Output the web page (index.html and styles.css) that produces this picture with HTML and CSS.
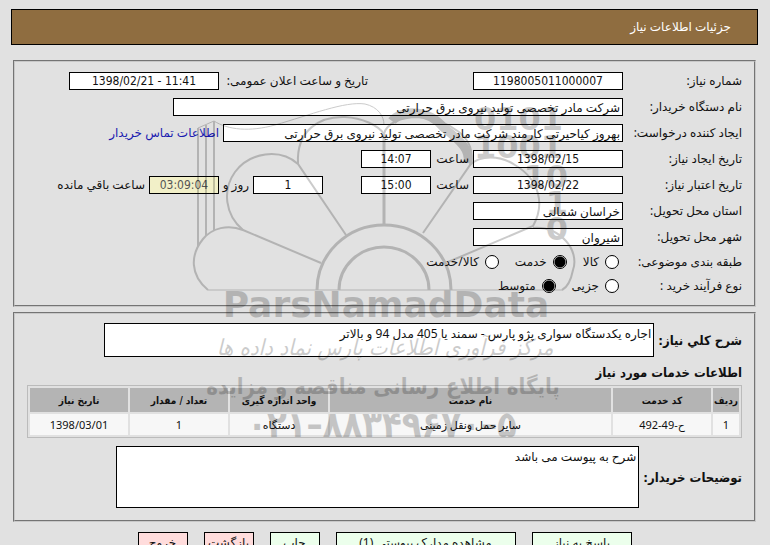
FILE: index.html
```html
<!DOCTYPE html>
<html lang="fa" dir="rtl">
<head>
  <meta charset="UTF-8">
  <meta name="viewport" content="width=device-width, initial-scale=1.0">
  <title>جزئیات اطلاعات نیاز</title>
  <link rel="stylesheet" href="styles.css">
</head>
<body>

<div class="page">
  <h1 class="page-title">جزئیات اطلاعات نیاز</h1>

  <form class="need-form">
    <fieldset class="box need-info">
      <div class="row">
        <label class="row-label" for="needNo">شماره نیاز:</label>
        <input class="field field-md center" id="needNo" type="text" value="1198005011000007" readonly>
        <label class="announce-label" for="announce">تاریخ و ساعت اعلان عمومی:</label>
        <input class="field field-md center" id="announce" type="text" dir="ltr" value="1398/02/21 - 11:41" readonly>
      </div>
      <div class="row">
        <label class="row-label" for="buyer">نام دستگاه خریدار:</label>
        <input class="field field-xl" id="buyer" type="text" value="شرکت مادر تخصصی تولید نیروی برق حرارتی" readonly>
      </div>
      <div class="row">
        <label class="row-label" for="creator">ایجاد کننده درخواست:</label>
        <input class="field field-lg" id="creator" type="text" value="بهروز کیاحیرتی کارمند شرکت مادر تخصصی تولید نیروی برق حرارتی" readonly>
        <a class="contact-link" href="#">اطلاعات تماس خریدار</a>
      </div>
      <div class="row">
        <label class="row-label" for="createDate">تاریخ ایجاد نیاز:</label>
        <input class="field field-md center" id="createDate" type="text" dir="ltr" value="1398/02/15" readonly>
        <label class="time-label" for="createTime">ساعت</label>
        <input class="field field-sm center" id="createTime" type="text" value="14:07" readonly>
      </div>
      <div class="row">
        <label class="row-label" for="validDate">تاریخ اعتبار نیاز:</label>
        <input class="field field-md center" id="validDate" type="text" dir="ltr" value="1398/02/22" readonly>
        <label class="time-label" for="validTime">ساعت</label>
        <input class="field field-sm center" id="validTime" type="text" value="15:00" readonly>
        <input class="field field-sm center days-left" id="daysLeft" type="text" value="1" readonly>
        <label class="days-label" for="daysLeft">روز و</label>
        <input class="field field-sm center countdown" id="timeLeft" type="text" value="03:09:04" readonly>
        <label for="timeLeft">ساعت باقي مانده</label>
      </div>
      <div class="row">
        <label class="row-label" for="province">استان محل تحویل:</label>
        <input class="field field-md" id="province" type="text" value="خراسان شمالی" readonly>
      </div>
      <div class="row">
        <label class="row-label" for="city">شهر محل تحویل:</label>
        <input class="field field-md" id="city" type="text" value="شیروان" readonly>
      </div>
      <div class="row radio-row">
        <span class="row-label">طبقه بندی موضوعی:</span>
        <label class="option"><input type="radio" name="category">کالا</label>
        <label class="option"><input type="radio" name="category" checked>خدمت</label>
        <label class="option"><input type="radio" name="category">کالا/خدمت</label>
      </div>
      <div class="row radio-row">
        <span class="row-label">نوع فرآیند خرید :</span>
        <label class="option"><input type="radio" name="process">جزیی</label>
        <label class="option"><input type="radio" name="process" checked>متوسط</label>
      </div>
    </fieldset>

    <fieldset class="box need-details">
      <div class="text-row">
        <label for="summary">شرح کلي نیاز:</label>
        <textarea class="summary" id="summary" readonly>اجاره یکدستگاه سواری پژو پارس - سمند یا 405 مدل 94 و بالاتر</textarea>
      </div>

      <h2 class="section-title">اطلاعات خدمات مورد نیاز</h2>
      <table class="services">
        <thead>
          <tr>
            <th class="col-index">ردیف</th>
            <th class="col-code">کد خدمت</th>
            <th>نام خدمت</th>
            <th class="col-code">واحد اندازه گیری</th>
            <th class="col-code">تعداد / مقدار</th>
            <th class="col-code">تاریخ نیاز</th>
          </tr>
        </thead>
        <tbody>
          <tr>
            <td>1</td>
            <td>ح-49-492</td>
            <td>سایر حمل ونقل زمینی</td>
            <td>دستگاه</td>
            <td>1</td>
            <td><bdo dir="ltr">1398/03/01</bdo></td>
          </tr>
        </tbody>
      </table>

      <div class="text-row">
        <label for="notes">توضیحات خریدار:</label>
        <textarea class="notes" id="notes" readonly>شرح به پیوست می باشد</textarea>
      </div>
    </fieldset>

    <div class="actions">
      <button class="btn btn-md" type="button">پاسخ به نیاز</button>
      <button class="btn btn-lg" type="button">مشاهده مدارک پیوستی (1)</button>
      <button class="btn btn-sm" type="button">چاپ</button>
      <button class="btn btn-sm btn-exit" type="button">بازگشت</button>
      <button class="btn btn-sm btn-exit" type="button">خروج</button>
    </div>
  </form>

  <!-- Watermark over the form -->
  <svg class="watermark" viewBox="190 90 390 360" direction="ltr" aria-hidden="true">
    <g class="wm-lines">
      <path class="thin" d="M214 121C228 130 250 132 275 125C310 115 345 101 365 104C378 107 384 116 384 125M198 128L214 121"/>
      <path d="M198 246V128M206 236V125M214 231V121"/>
      <path d="M384 134V225" stroke-width="3"/>
      <path d="M208 290C190 275 190 255 203 239C212 228 228 224 243 230L321 263"/>
      <path d="M243 230C225 215 222 190 235 172C250 152 280 148 298 164L346 235"/>
      <path d="M298 164C296 130 320 116 345 117C362 118 378 125 384 134"/>
      <path d="M384 134C386 124 400 117 418 117C450 120 478 138 470 165L423 233"/>
      <path d="M470 165C480 155 500 155 515 165C540 180 545 205 533 226L448 262"/>
      <path d="M533 228C560 226 580 250 573 270C571 280 568 287 562 290"/>
      <path class="thin" d="M208 290H562"/>
      <path d="M317 290A67 65 0 0 1 451 290M339 290A45 43 0 0 1 429 290" stroke-width="3"/>
      <path d="M392 121C400 110 428 108 444 128C462 142 470 150 468 163" stroke-width="9"/>
    </g>
    <g class="wm-text">
      <text class="bits" x="563" y="130" text-anchor="end">0101</text>
      <text class="bits" x="563" y="158" text-anchor="end">1001</text>
      <text class="bits" x="568" y="188" text-anchor="end">10</text>
      <text class="bits" x="568" y="214" text-anchor="end">1</text>
      <text class="bits" x="568" y="240" text-anchor="end">0</text>
      <text class="brand" x="386" y="317" text-anchor="middle">ParsNamadData</text>
      <text class="motto" x="385" y="355" text-anchor="middle">مرکز فرآوری اطلاعات پارس نماد داده ها</text>
      <text class="site" x="383" y="394" text-anchor="middle">پایگاه اطلاع رسانی مناقصه و مزایده</text>
      <text class="phone" x="382" y="437" text-anchor="middle">۰۲۱–۸۸۳۴۹۶۷۰–۵</text>
    </g>
  </svg>
</div>

</body>
</html>
```
FILE: styles.css
```css
body {
  margin: 0;
  background-color: #e1e1e1;
  color: #111;
  font-family: "Noto Sans", "DejaVu Sans", sans-serif;
  font-size: 12px;
  line-height: 16px;
}
.page {
  position: relative;
  padding: 9px 12px 12px 11px;
}
.page-title {
  margin: 0;
  padding: 0 26px;
  border: 1px solid #000;
  background-color: #8f6d40;
  color: #fff;
  font-size: 12px;
  font-weight: normal;
  line-height: 34px;
}
.need-form {
  padding: 15px 2px 0;
}
.box {
  margin: 0;
  min-width: 0;
  border: 2px groove #c8c8c8;
}
.need-info {
  padding: 6px 12px 7px;
}
.need-details {
  margin-top: 5px;
  padding: 9px 12px 12px;
}
.row {
  display: flex;
  align-items: center;
  gap: 4px;
  height: 26px;
  white-space: nowrap;
}
.row-label {
  width: 115px;
}
.field {
  box-sizing: border-box;
  height: 18px;
  padding: 0 2px;
  border: 1px solid #000;
  background-color: #fff;
  color: #111;
  font: inherit;
}
.field-sm {
  width: 70px;
}
.field-md {
  width: 150px;
}
.field-lg {
  width: 400px;
}
.field-xl {
  width: 450px;
}
.center {
  font-family: "DejaVu Sans Condensed", sans-serif;
  text-align: center;
}
.announce-label {
  width: 145px;
  margin-right: 101px;
}
.contact-link {
  color: #1a1ab0;
  text-decoration: none;
}
.time-label {
  width: 34px;
}
.days-left {
  margin-right: 34px;
}
.days-label {
  width: 26px;
}
.countdown {
  background-color: #f2f0c8;
  color: #555;
}
.radio-row {
  height: 24px;
}
.option {
  display: flex;
  align-items: center;
  gap: 6px;
  margin-left: 12px;
}
.option input {
  appearance: none;
  box-sizing: border-box;
  width: 14px;
  height: 14px;
  margin: 0;
  border: 1px solid #000;
  border-radius: 50%;
  background-color: #fff;
}
.option input:checked {
  background: radial-gradient(circle, #000 5px, #fff 6px);
}
.radio-row .row-label {
  width: 119px;
}
.text-row {
  display: flex;
  align-items: center;
  gap: 4px;
}
.text-row label {
  font: bold 13px "DejaVu Sans Condensed", sans-serif;
}
.text-row textarea {
  box-sizing: border-box;
  margin: 0;
  padding: 2px;
  border: 1px solid #000;
  background-color: #fff;
  color: #111;
  font: inherit;
  resize: none;
}
.summary {
  width: 550px;
  height: 34px;
}
.notes {
  width: 523px;
  height: 62px;
}
.section-title {
  margin: 8px 0 4px;
  font: bold 13px/16px "DejaVu Sans Condensed", sans-serif;
}
.services {
  width: 100%;
  margin-bottom: 8px;
  border: 1px solid #bbb;
  border-spacing: 2px;
  table-layout: fixed;
}
.services th,
.services td {
  padding: 0;
  text-align: center;
  white-space: nowrap;
}
.services th {
  height: 24px;
  background-color: #b4b4b4;
  font: bold 10px "DejaVu Sans Condensed", sans-serif;
}
.services td {
  height: 21px;
  background-color: #f7f7f7;
  font-size: 11px;
}
.services .col-index {
  width: 26px;
}
.services .col-code {
  width: 98px;
}
.actions {
  display: flex;
  justify-content: center;
  gap: 16px;
  padding-top: 10px;
}
.btn {
  height: 22px;
  padding: 0;
  border: 1px solid #000;
  background-color: #ecffec;
  color: #111;
  font: inherit;
  white-space: nowrap;
}
.btn-sm {
  width: 50px;
}
.btn-md {
  width: 100px;
}
.btn-lg {
  width: 180px;
}
.btn-exit {
  background-color: #ffdcdc;
}
.watermark {
  position: absolute;
  top: 90px;
  left: calc(50% - 195px);
  width: 390px;
  height: 360px;
  opacity: 0.2;
  pointer-events: none;
}
.wm-lines {
  fill: none;
  stroke: #000;
  stroke-width: 2;
}
.wm-lines .thin {
  stroke-width: 1;
}
.bits {
  font: bold 32px "DejaVu Sans", sans-serif;
}
.brand {
  font: bold 36px "DejaVu Sans", sans-serif;
}
.motto {
  font: italic 22px "DejaVu Sans Condensed", sans-serif;
}
.site {
  font: bold 22px "DejaVu Sans Condensed", sans-serif;
}
.phone {
  font: bold 36px "DejaVu Sans Condensed", sans-serif;
}
```
